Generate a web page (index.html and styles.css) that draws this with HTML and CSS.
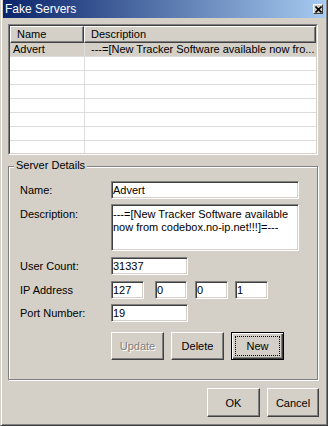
FILE: index.html
```html
<!DOCTYPE html>
<html lang="en">

<head>
    <meta charset="UTF-8">
    <meta name="viewport" content="width=device-width, initial-scale=1.0">
    <title>Fake Servers</title>
    <link rel="stylesheet" href="styles.css">
</head>

<body>
    <div class="window">
        <div class="titlebar">
            <span class="title">Fake Servers</span>
            <span class="close">
                <svg width="7" height="7" viewBox="0 0 7 7">
                    <path d="M0.5 0.5l6 6M6.5 0.5l-6 6" stroke="#000" stroke-width="1.6" />
                </svg>
            </span>
        </div>

        <div class="content">
            <div class="list">
                <div class="list-inner">
                    <div class="list-head">
                        <div class="col-name">Name</div>
                        <div class="col-desc">Description</div>
                    </div>
                    <div class="list-row selected">
                        <div class="col-name">Advert</div>
                        <div class="col-desc">---=[New Tracker Software available now fro...</div>
                    </div>
                    <div class="list-row"><div class="col-name"></div><div class="col-desc"></div></div>
                    <div class="list-row"><div class="col-name"></div><div class="col-desc"></div></div>
                    <div class="list-row"><div class="col-name"></div><div class="col-desc"></div></div>
                    <div class="list-row"><div class="col-name"></div><div class="col-desc"></div></div>
                    <div class="list-row"><div class="col-name"></div><div class="col-desc"></div></div>
                    <div class="list-row"><div class="col-name"></div><div class="col-desc"></div></div>
                    <div class="list-row"><div class="col-name"></div><div class="col-desc"></div></div>
                </div>
            </div>

            <div class="group">
                <div class="legend">Server Details</div>

                <div class="row tight">
                    <label>Name:</label>
                    <input class="edit wide" value="Advert">
                </div>
                <div class="row top">
                    <label>Description:</label>
                    <textarea class="edit wide memo">---=[New Tracker Software available
now from codebox.no-ip.net!!!]=---</textarea>
                </div>
                <div class="row">
                    <label>User Count:</label>
                    <input class="edit short" value="31337">
                </div>
                <div class="row tight">
                    <label>IP Address</label>
                    <div class="ip">
                        <input class="edit oct o1" value="127">
                        <input class="edit oct o2" value="0">
                        <input class="edit oct" value="0">
                        <input class="edit oct last" value="1">
                    </div>
                </div>
                <div class="row buttons-gap">
                    <label>Port Number:</label>
                    <input class="edit short" value="19">
                </div>

                <div class="buttons">
                    <button class="btn" disabled>Update</button>
                    <button class="btn">Delete</button>
                    <button class="btn default"><span class="focus">New</span></button>
                </div>
            </div>

            <div class="actions">
                <button class="btn big">OK</button>
                <button class="btn big cancel">Cancel</button>
            </div>
        </div>
    </div>
</body>

</html>
```

FILE: styles.css
```css
body {
    margin: 0;
    background-color: #d4d0c8;
    font-family: "Liberation Sans", Arial, sans-serif;
    font-size: 11px;
    color: #000;
}

.window {
    width: 328px;
    height: 426px;
    box-sizing: border-box;

    border: 1px solid;
    border-top: 0;
    border-color: #d4d0c8 #404040 #404040 #d4d0c8;
    box-shadow: inset 1px 0 #fff, inset -1px -1px #808080;
    padding: 0 2px 2px 2px;

    overflow: hidden;
}

.titlebar {
    height: 18px;
    display: flex;
    align-items: center;
    justify-content: space-between;
    padding: 0 2px 0 2px;

    background: linear-gradient(to right, #0a246a, #a6caf0);
    color: #fff;
}

.titlebar .title {
    font-size: 12px;
}

.titlebar .close {
    width: 10px;
    height: 10px;
    box-sizing: border-box;
    display: flex;
    align-items: center;
    justify-content: center;

    background-color: #d4d0c8;
    border: 1px solid;
    border-color: #fff #404040 #404040 #fff;
}

.content {
    padding: 6px 0 0 5px;
}

/* list view */

.list {
    width: 310px;
    height: 131px;
    box-sizing: border-box;
    border: 1px solid;
    border-color: #808080 #fff #fff #808080;
}

.list-inner {
    height: 100%;
    box-sizing: border-box;
    border: 1px solid;
    border-color: #404040 #d4d0c8 #d4d0c8 #404040;
    background-color: #fff;
    overflow: hidden;
}

.list-head {
    display: flex;
    height: 17px;
}

.list-head div {
    box-sizing: border-box;
    height: 17px;
    line-height: 15px;
    padding-left: 6px;

    background-color: #d4d0c8;
    border: 1px solid;
    border-color: #fff #404040 #404040 #fff;
    box-shadow: inset -1px -1px #808080;
}

.list-head .col-name {
    width: 74px;
}

.list-head .col-desc {
    flex: 1;
}

.list-row {
    display: flex;
    height: 14px;
    box-sizing: border-box;
    border-bottom: 1px solid #dcdcdc;
    line-height: 13px;
}

.list-row.selected {
    background-color: #d4d0c8;
}

.list-row .col-name {
    width: 75px;
    box-sizing: border-box;
    padding-left: 3px;
    border-right: 1px solid #dcdcdc;
}

.list-row .col-desc {
    flex: 1;
    padding-left: 6px;
    white-space: nowrap;
    overflow: hidden;
}

/* group box */

.group {
    position: relative;
    width: 310px;
    height: 214px;
    box-sizing: border-box;
    margin-top: 11px;
    padding: 14px 0 0 11px;

    border: 1px solid #808080;
    box-shadow: inset 1px 1px #fff, 1px 1px #fff;
}

.group .legend {
    position: absolute;
    top: -8px;
    left: 5px;
    padding: 0 2px;
    line-height: 13px;
    background-color: #d4d0c8;
}

.row {
    display: flex;
    align-items: center;
    margin-bottom: 6px;
}

.row.tight {
    margin-bottom: 5px;
}

.row.top {
    align-items: flex-start;
}

.row.top label {
    padding-top: 4px;
}

.row.buttons-gap {
    margin-bottom: 10px;
}

.row label {
    width: 91px;
    flex-shrink: 0;
}

.edit {
    box-sizing: border-box;
    height: 18px;
    margin: 0;
    padding: 0 1px;

    font-family: inherit;
    font-size: 11px;
    color: #000;
    background-color: #fff;

    border: 1px solid;
    border-color: #808080 #fff #fff #808080;
    box-shadow: inset 1px 1px #404040, inset -1px -1px #d4d0c8;
    outline: none;
}

.edit.wide {
    width: 188px;
}

.edit.short {
    width: 77px;
}

.edit.memo {
    height: 47px;
    padding: 3px 1px;
    line-height: 13px;
    resize: none;
    overflow: hidden;
}

.ip {
    display: flex;
}

.edit.oct {
    width: 33px;
    margin-right: 7px;
}

.edit.o1 {
    margin-right: 11px;
}

.edit.o2 {
    width: 32px;
    margin-right: 8px;
}

.edit.last {
    margin-right: 0;
}

/* buttons */

.buttons {
    display: flex;
    gap: 7px;
    padding-left: 91px;
}

.btn {
    width: 53px;
    height: 28px;
    margin: 0;
    padding: 0;

    font-family: inherit;
    font-size: 11px;
    color: #000;
    background-color: #d4d0c8;

    border: 1px solid;
    border-color: #fff #404040 #404040 #fff;
    box-shadow: inset -1px -1px #808080;
}

.btn:disabled {
    color: #808080;
    text-shadow: 1px 1px #fff;
}

.btn.default {
    display: flex;
    border-color: #000;
    box-shadow: inset 1px 1px #fff, inset -1px -1px #404040, inset -2px -2px #808080;
}

.btn .focus {
    flex: 1;
    margin: 3px;
    display: flex;
    align-items: center;
    justify-content: center;
    border: 1px dotted #000;
}

.actions {
    display: flex;
    justify-content: flex-end;
    gap: 7px;
    width: 311px;
    margin-top: 8px;
}

.btn.big {
    height: 29px;
}

.btn.cancel {
    width: 52px;
}
```
